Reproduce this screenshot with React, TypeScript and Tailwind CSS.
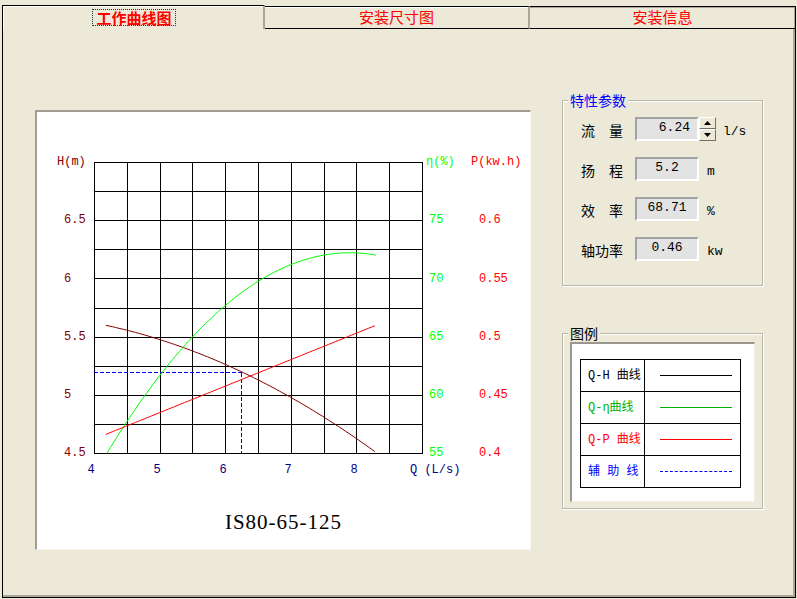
import React from 'react';

// chart scale: Q 4..9 across, H 4.5..7, eta 55..80, P 0.4..0.65 up
const X = (q: number) => 94 + (q - 4) * 65.6;
const YH = (h: number) => 453 - (h - 4.5) * 116.4;
const YE = (e: number) => 453 - (e - 55) * 11.64;
const YP = (p: number) => 453 - (p - 0.4) * 1164;

const curve = (from: number, to: number, fy: (q: number) => number) => {
  const pts: string[] = [];
  for (let q = from; q <= to + 0.0001; q += 0.05) {
    pts.push(`${X(q).toFixed(1)},${fy(q).toFixed(1)}`);
  }
  return pts.join(' ');
};

// fitted around the working point Q = 6.24
const headCurve = curve(4.18, 8.31, (q) => {
  const u = q - 6.24;
  return YH(5.2 - 0.2653 * u - 0.0352 * u * u);
});
const effCurve = curve(4.2, 8.31, (q) => YE(72.2 - 1.256 * (q - 7.9) * (q - 7.9)));
const powerCurve = curve(4.18, 8.31, (q) => YP(0.416 + 0.02276 * (q - 4.18)));

const cols = Array.from({ length: 11 }, (_, i) => Math.round(94 + i * 32.8) + 0.5);
const rows = Array.from({ length: 11 }, (_, i) => Math.round(162 + i * 29.1) + 0.5);

const hTicks = [
  ['6.5', 220],
  ['6', 279],
  ['5.5', 337],
  ['5', 395],
  ['4.5', 453],
] as const;
const eTicks = [
  ['75', 220],
  ['70', 279],
  ['65', 337],
  ['60', 395],
  ['55', 453],
] as const;
const pTicks = [
  ['0.6', 220],
  ['0.55', 279],
  ['0.5', 337],
  ['0.45', 395],
  ['0.4', 453],
] as const;
const qTicks = [
  ['4', 91],
  ['5', 157],
  ['6', 223],
  ['7', 288],
  ['8', 354],
] as const;

const CurveChart: React.FC = () => (
  <svg width={493} height={388} viewBox="37 112 493 388" className="block font-['Liberation_Mono',monospace] text-[12px]">
    {/* grid */}
    <g stroke="#000" strokeWidth={1} shapeRendering="crispEdges">
      {cols.map((x) => (
        <line key={`c${x}`} x1={x} y1={162} x2={x} y2={453.5} />
      ))}
      {rows.map((y) => (
        <line key={`r${y}`} x1={94} y1={y} x2={422.5} y2={y} />
      ))}
    </g>

    {/* axis captions */}
    <text x={57} y={162} dominantBaseline="central" fill="#800000">H(m)</text>
    <text x={426} y={162} dominantBaseline="central" fill="#00ff00">η(%)</text>
    <text x={471} y={162} dominantBaseline="central" fill="#ff0000">P(kw.h)</text>
    <text x={410} y={470} dominantBaseline="central" fill="#000080">Q (L/s)</text>

    {hTicks.map(([t, y]) => (
      <text key={`h${t}`} x={64} y={y} dominantBaseline="central" fill="#800000">{t}</text>
    ))}
    {eTicks.map(([t, y]) => (
      <text key={`e${t}`} x={429} y={y} dominantBaseline="central" fill="#00ff00">{t}</text>
    ))}
    {pTicks.map(([t, y]) => (
      <text key={`p${t}`} x={479} y={y} dominantBaseline="central" fill="#ff0000">{t}</text>
    ))}
    {qTicks.map(([t, x]) => (
      <text key={`q${t}`} x={x} y={470} dominantBaseline="central" textAnchor="middle" fill="#000080">{t}</text>
    ))}

    {/* working point guides */}
    <g stroke="#0000ff" strokeWidth={1} strokeDasharray="4 2" shapeRendering="crispEdges" fill="none">
      <line x1={94} y1={372.5} x2={241.5} y2={372.5} />
      <line x1={241.5} y1={372.5} x2={241.5} y2={453} />
    </g>

    <polyline points={headCurve} fill="none" stroke="#800000" strokeWidth={1} />
    <polyline points={effCurve} fill="none" stroke="#00ff00" strokeWidth={1} />
    <polyline points={powerCurve} fill="none" stroke="#ff0000" strokeWidth={1} />
  </svg>
);

const Arrow: React.FC<{ up?: boolean }> = ({ up }) => (
  <svg width={7} height={4} viewBox="0 0 7 4">
    <polygon points={up ? '3.5,0 7,4 0,4' : '0,0 7,0 3.5,4'} fill="#000" />
  </svg>
);

const ValueBox: React.FC<{ value: string; spin?: boolean }> = ({ value, spin }) => (
  <div className="ml-[12px] flex h-[24px]">
    <div
      className={`flex h-[24px] w-[64px] items-center border-2 border-t-[#a3a3a3] border-l-[#a3a3a3] border-r-white border-b-white bg-[#e3e3e3] pb-[3px] text-[13px] text-black ${
        spin ? 'justify-end pr-[7px]' : 'justify-center'
      }`}
    >
      {value}
    </div>
    {spin && (
      <div className="flex w-[17px] flex-col">
        <div className="flex h-[12px] items-center justify-center border border-t-white border-l-white border-r-[#716f64] border-b-[#716f64] bg-[#ece9d8]">
          <Arrow up />
        </div>
        <div className="flex h-[12px] items-center justify-center border border-t-white border-l-white border-r-[#716f64] border-b-[#716f64] bg-[#ece9d8]">
          <Arrow />
        </div>
      </div>
    )}
  </div>
);

const ParamRow: React.FC<{ label: string[]; value: string; unit: string; spin?: boolean }> = ({ label, value, unit, spin }) => (
  <div className="flex h-[24px] items-end">
    <div className="flex w-[42px] justify-between text-[14px] leading-[18px] text-black">
      {label.map((c) => (
        <span key={c}>{c}</span>
      ))}
    </div>
    <ValueBox value={value} spin={spin} />
    <span className={`${spin ? 'ml-[7px]' : 'ml-[8px]'} text-[13px] leading-[18px] text-black`}>{unit}</span>
  </div>
);

const legendRows = [
  { text: 'Q-H 曲线', color: 'text-black', line: 'border-t border-black' },
  { text: 'Q-η曲线', color: 'text-[#00b000]', line: 'border-t border-[#00b000]' },
  { text: 'Q-P 曲线', color: 'text-[#ff0000]', line: 'border-t border-[#ff0000]' },
  { text: '辅 助 线', color: 'text-[#0000ff]', line: 'border-t border-dashed border-[#0000ff]' },
];

export default function App() {
  return (
    <div className="flex h-[599px] w-[797px] flex-col bg-[#ece9d8] pl-[2px] pr-[1px] pt-[5px] pb-[1px] font-['Liberation_Mono','Noto_Sans_CJK_SC',monospace]">
      {/* tab strip */}
      <div className="flex h-[24px] text-[15px] text-[#ff0000] font-['Noto_Sans_CJK_SC',sans-serif]">
        <div className="flex h-[24px] w-[263px] items-center justify-center border-l border-t border-black border-r-2 border-r-[#aca899] pl-[2px] shadow-[inset_1px_1px_0_#fff]">
          <span className="border border-dotted border-[#104040] px-[3px] font-bold leading-[15px]">工作曲线图</span>
        </div>
        <div className="mt-[1px] flex h-[23px] w-[265px] items-center justify-center border-t border-b border-black border-r-2 border-r-[#aca899] shadow-[inset_0_1px_0_#fff]">
          安装尺寸图
        </div>
        <div className="mt-[1px] flex h-[23px] flex-1 items-center justify-center border-t border-b border-r border-black shadow-[inset_-1px_1px_0_#aca899]">
          安装信息
        </div>
      </div>

      {/* page body */}
      <div className="flex flex-1 items-start border-l border-r border-b border-black pl-[32px] shadow-[inset_-2px_-2px_0_#aca899]">
        <div className="mt-[81px] h-[440px] w-[496px] border-t-2 border-l-2 border-r border-b border-t-[#a09e94] border-l-[#a09e94] border-r-[#f7f6ef] border-b-[#f7f6ef] bg-white">
          <CurveChart />
          <div className="mt-[10px] text-center font-['Liberation_Serif',serif] text-[21px] leading-[24px] tracking-[1px] text-black">
            IS80-65-125
          </div>
        </div>

        <div className="ml-[31px] flex flex-col font-['Noto_Sans_CJK_SC',sans-serif]">
          <div className="relative mt-[71px] h-[186px] w-[201px] border border-[#bab8aa] shadow-[1px_1px_0_#fff,inset_1px_1px_0_#fff]">
            <span className="absolute left-[5px] top-[-10px] bg-[#ece9d8] px-[2px] text-[14px] leading-[18px] text-[#0000ff]">
              特性参数
            </span>
            <div className="flex flex-col gap-[16px] pl-[18px] pt-[16px] font-['Liberation_Mono','Noto_Sans_CJK_SC',monospace]">
              <ParamRow label={['流', '量']} value="6.24" unit="l/s" spin />
              <ParamRow label={['扬', '程']} value="5.2" unit="m" />
              <ParamRow label={['效', '率']} value="68.71" unit="%" />
              <ParamRow label={['轴', '功', '率']} value="0.46" unit="kw" />
            </div>
          </div>

          <div className="relative mt-[47px] h-[176px] w-[201px] border border-[#bab8aa] shadow-[1px_1px_0_#fff,inset_1px_1px_0_#fff]">
            <span className="absolute left-[5px] top-[-10px] bg-[#ece9d8] px-[2px] text-[14px] leading-[18px] text-black">
              图例
            </span>
            <div className="ml-[7px] mt-[8px] h-[160px] w-[185px] border-t-2 border-l-2 border-r border-b border-t-[#9a988e] border-l-[#9a988e] border-r-[#f1efe2] border-b-[#f1efe2] bg-white">
              <div className="ml-[8px] mt-[15px] grid w-[161px] grid-cols-[64px_96px] border-l border-t border-black font-['Liberation_Mono','Noto_Sans_CJK_SC',monospace] text-[12px]">
                {legendRows.map((r) => (
                  <React.Fragment key={r.text}>
                    <div className={`flex h-[32px] items-center whitespace-pre border-r border-b border-black pl-[7px] ${r.color}`}>
                      {r.text}
                    </div>
                    <div className="flex h-[32px] items-center border-r border-b border-black pl-[15px]">
                      <div className={`w-[72px] ${r.line}`} />
                    </div>
                  </React.Fragment>
                ))}
              </div>
            </div>
          </div>
        </div>
      </div>
    </div>
  );
}
